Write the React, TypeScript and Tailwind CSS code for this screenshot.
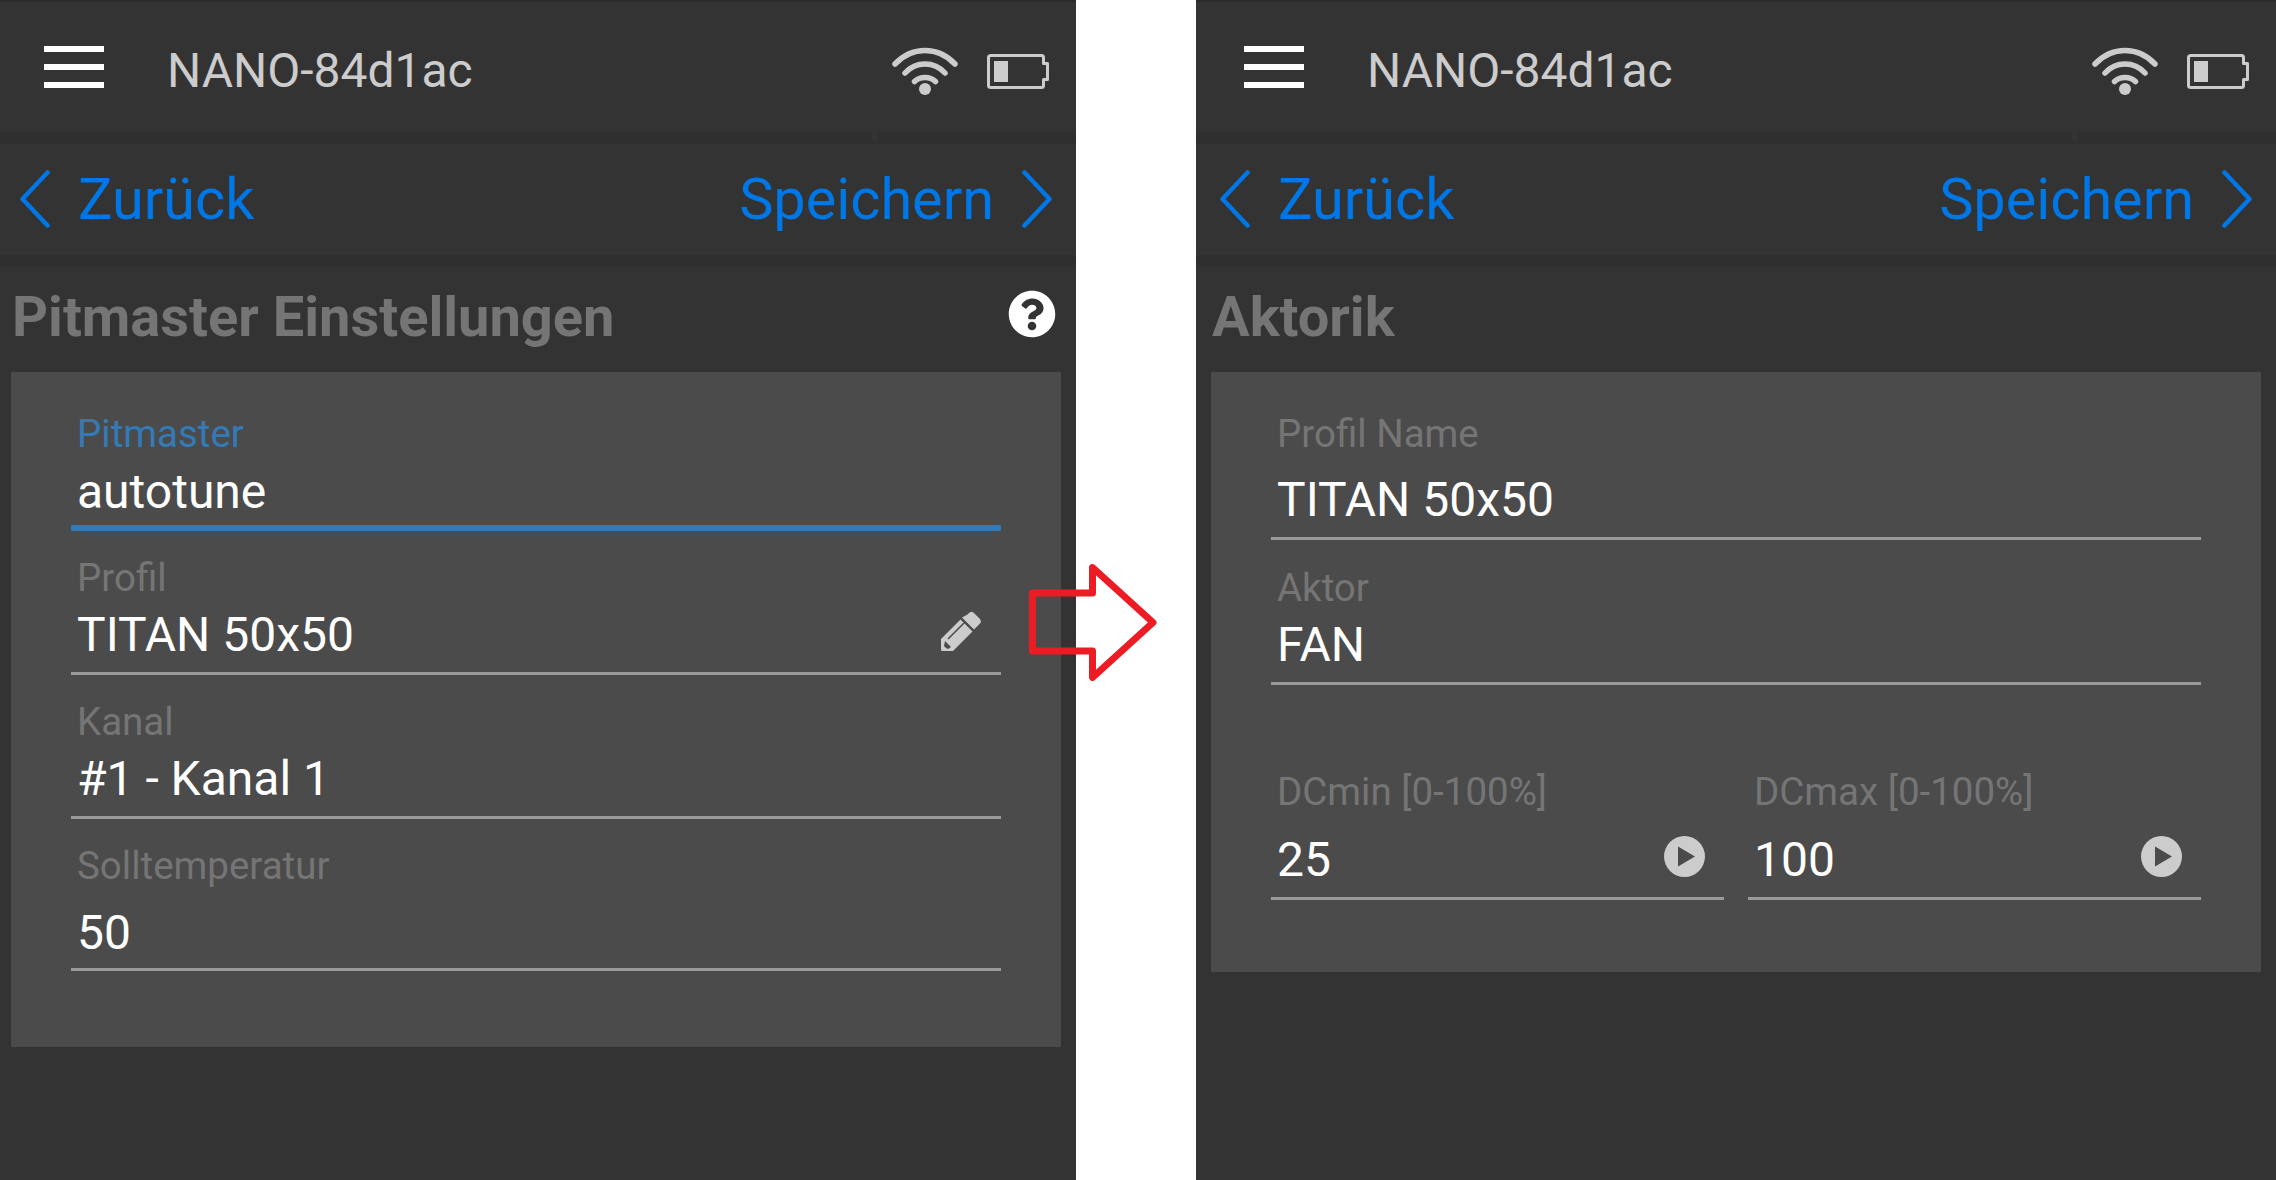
import React from 'react';
import { FaQuestionCircle } from 'react-icons/fa';

const Wifi: React.FC = () => (
  <svg width="66" height="48" viewBox="0 0 66 48" fill="none" stroke="#cccccc" strokeWidth="5.5" strokeLinecap="round">
    <path d="M3 17C20 -1 46 -1 63 17" />
    <path d="M13 26C24 14 42 14 53 26" />
    <path d="M22.5 34.5C28 29 38 29 43.5 34.5" />
    <circle cx="33" cy="42" r="6" fill="#cccccc" stroke="none" />
  </svg>
);

const Battery: React.FC = () => (
  <svg width="62" height="35" viewBox="0 0 62 35" fill="none">
    <path
      d="M4 1.5H54.5Q56.5 1.5 56.5 3.5V9.5H60.5V25.5H56.5V31.5Q56.5 33.5 54.5 33.5H4Q1.5 33.5 1.5 31.5V3.5Q1.5 1.5 4 1.5Z"
      stroke="#cccccc"
      strokeWidth="3"
      strokeLinejoin="round"
    />
    <rect x="7" y="7" width="14" height="21" fill="#cccccc" />
  </svg>
);

const Chevron: React.FC<{ right?: boolean }> = ({ right }) => (
  <svg width="30" height="58" viewBox="0 0 30 58" fill="none" stroke="#0077e6" strokeWidth="4.5" strokeLinecap="round" strokeLinejoin="round">
    <path d={right ? 'M2.5 2.5L27.5 29L2.5 55.5' : 'M27.5 2.5L2.5 29L27.5 55.5'} />
  </svg>
);

const Pencil: React.FC = () => (
  <svg width="41" height="41" viewBox="0 0 41 41" fill="#cccccc">
    <path d="M27 4.5Q30 0.5 33 2.5L39.5 9Q41.5 12 39 14L33.5 19.5L21.5 7.5Z" transform="translate(-0.5,0)" />
    <path d="M19.5 9.5L31.5 21.5L12 41H1.5Q0 41 0 39.5V29Z" />
    <path d="M23 13L7 29" stroke="#4b4b4b" strokeWidth="1.6" />
    <path d="M4 31L10 37L7 39L5 38L3 36Z" fill="#4b4b4b" />
  </svg>
);

const Play: React.FC = () => (
  <svg width="41" height="41" viewBox="0 0 41 41">
    <circle cx="20.5" cy="20.5" r="20.5" fill="#cccccc" />
    <path d="M14 10.5L31 20.5L14 30.5Z" fill="#4b4b4b" />
  </svg>
);

const RedArrow: React.FC = () => (
  <svg
    className="absolute left-[1029px] top-[564px]"
    width="128"
    height="117"
    viewBox="0 0 128 117"
    fill="none"
    stroke="#ed1c24"
    strokeWidth="7"
    strokeLinejoin="round"
  >
    <path d="M3.5 29H63.5V3.5L124 58.5L63.5 113.5V87H3.5Z" />
  </svg>
);

interface FieldProps {
  label: string;
  value: string;
  className?: string;
  valueGap?: string;
  linePad?: string;
  active?: boolean;
  icon?: React.ReactNode;
}

const Field: React.FC<FieldProps> = ({ label, value, className = '', valueGap = 'mt-[7px]', linePad = 'pb-[10px]', active, icon }) => (
  <div className={className}>
    <div className={`h-[44px] pl-[6px] text-[38.5px] leading-[45px] ${active ? 'text-[#337ab7]' : 'text-[#757575]'}`}>{label}</div>
    <div
      className={`flex items-center justify-between pl-[6px] ${valueGap} ${linePad} ${
        active ? 'border-b-[6px] border-[#337ab7]' : 'border-b-[3px] border-[#999999]'
      }`}
    >
      <span className="h-[56px] text-[48px] leading-[58px] text-white">{value}</span>
      {icon}
    </div>
  </div>
);

const Phone: React.FC<{ title: string; help?: boolean; wide?: boolean; children: React.ReactNode }> = ({ title, help, wide, children }) => (
  <div className={`flex shrink-0 flex-col bg-[#333333] ${wide ? 'w-[1080px]' : 'w-[1076px]'}`}>
    <header className={`flex h-[132px] items-center border-t-2 border-[#2b2b2b] pr-[27px] ${wide ? 'pl-[48px]' : 'pl-[44px]'}`}>
      <div className="flex h-[42px] w-[60px] flex-col justify-between">
        <span className="h-[6px] bg-white" />
        <span className="h-[6px] bg-white" />
        <span className="h-[6px] bg-white" />
      </div>
      <span className="ml-[63px] mt-[7px] text-[48px] text-[#cccccc]">NANO-84d1ac</span>
      <div className="ml-auto mt-[8px] flex items-center gap-[29px]">
        <Wifi />
        <Battery />
      </div>
    </header>
    <div className="h-[12px] bg-[#2f2f2f]">
      <div className={`h-[9px] w-[6px] bg-[#333333] ${wide ? 'ml-[876px]' : 'ml-[872px]'}`} />
    </div>
    <nav className={`flex h-[111px] items-center justify-between pr-[24px] text-[57.6px] text-[#0077e6] ${wide ? 'pl-[24px]' : 'pl-[20px]'}`}>
      <div className="flex items-center gap-[28px]">
        <Chevron />
        <span className="mt-[2px]">Zurück</span>
      </div>
      <div className="flex items-center gap-[28px]">
        <span className="mt-[2px]">Speichern</span>
        <Chevron right />
      </div>
    </nav>
    <div className="h-[12px] bg-[#2f2f2f]" />
    <div className={`flex h-[105px] items-center justify-between pr-[20px] ${wide ? 'pl-[16px]' : 'pl-[12px]'}`}>
      <h1 className="mb-[5px] text-[56px] font-bold text-[#757575]">{title}</h1>
      {help && <FaQuestionCircle className="mb-[11px] text-white" size={48} />}
    </div>
    {children}
  </div>
);

const App: React.FC = () => (
  <div className="relative flex h-[1180px] w-[2276px] overflow-hidden bg-white font-['Roboto',sans-serif]">
    <Phone title="Pitmaster Einstellungen" help>
      <section className="ml-[11px] h-[675px] w-[1050px] bg-[#4b4b4b] px-[60px] pt-[39px]">
        <Field label="Pitmaster" value="autotune" active valueGap="mt-[8px]" linePad="pb-[6px]" />
        <Field
          label="Profil"
          value="TITAN 50x50"
          className="mt-[24px]"
          icon={
            <div className="mb-[8px] mr-[19px] h-[41px]">
              <Pencil />
            </div>
          }
        />
        <Field label="Kanal" value="#1 - Kanal 1" className="mt-[24px]" />
        <Field label="Solltemperatur" value="50" className="mt-[24px]" valueGap="mt-[17px]" linePad="pb-[8px]" />
      </section>
    </Phone>
    <div className="w-[120px] shrink-0" />
    <Phone title="Aktorik" wide>
      <section className="ml-[15px] h-[600px] w-[1050px] bg-[#4b4b4b] px-[60px] pt-[39px]">
        <Field label="Profil Name" value="TITAN 50x50" valueGap="mt-[16px]" />
        <Field label="Aktor" value="FAN" className="mt-[25px]" />
        <div className="mt-[84px] grid grid-cols-2 gap-[24px]">
          <Field
            label="DCmin [0-100%]"
            value="25"
            valueGap="mt-[18px]"
            linePad="pb-[10px]"
            icon={
              <div className="mb-[6px] mr-[19px] h-[41px]">
                <Play />
              </div>
            }
          />
          <Field
            label="DCmax [0-100%]"
            value="100"
            valueGap="mt-[18px]"
            linePad="pb-[10px]"
            icon={
              <div className="mb-[6px] mr-[19px] h-[41px]">
                <Play />
              </div>
            }
          />
        </div>
      </section>
    </Phone>
    <RedArrow />
  </div>
);

export default App;
